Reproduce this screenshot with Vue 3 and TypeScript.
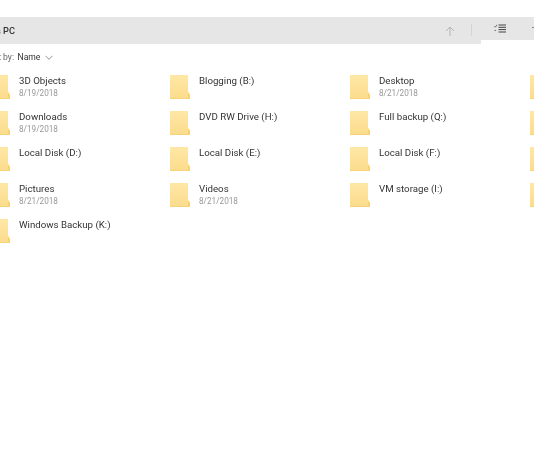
<script setup lang="ts">
interface Item { name: string; date?: string }
const items: Item[] = [
  { name: '3D Objects', date: '8/19/2018' },
  { name: 'Blogging (B:)' },
  { name: 'Desktop', date: '8/21/2018' },
  { name: 'Documents', date: '8/21/2018' },
  { name: 'Downloads', date: '8/19/2018' },
  { name: 'DVD RW Drive (H:)' },
  { name: 'Full backup (Q:)' },
  { name: 'Games (G:)' },
  { name: 'Local Disk (D:)' },
  { name: 'Local Disk (E:)' },
  { name: 'Local Disk (F:)' },
  { name: 'Music', date: '8/19/2018' },
  { name: 'Pictures', date: '8/21/2018' },
  { name: 'Videos', date: '8/21/2018' },
  { name: 'VM storage (I:)' },
  { name: 'Windows (C:)' },
  { name: 'Windows Backup (K:)' },
]
</script>

<template>
  <div class="page">
    <header class="bar">
      <span class="title">This PC</span>
      <div class="tools">
        <svg class="up" width="10" height="10" viewBox="0 0 10 10" aria-hidden="true">
          <path d="M5 10V1M1 5l4-4 4 4" fill="none" stroke="#b4b4b4" stroke-width="1" />
        </svg>
        <span class="sep"></span>
        <div class="tab">
          <svg width="12" height="9" viewBox="0 0 12 9" aria-hidden="true">
            <path d="M0.3 2.2l1 1L3 0.8M0.5 6.5h1.6" fill="none" stroke="#666" stroke-width="0.9" />
            <path d="M4.5 1h7.5M4.5 3.3h7.5M4.5 5.6h7.5M4.5 8h7.5" fill="none" stroke="#444" stroke-width="1" />
          </svg>
          <svg class="next" width="2" height="8" viewBox="0 0 2 8" aria-hidden="true">
            <path d="M0 4.5h2" stroke="#888" stroke-width="1" />
          </svg>
        </div>
      </div>
    </header>
    <div class="sort">
      <span class="sort-label">Sort by:</span>
      <span class="sort-value">Name</span>
      <svg width="8" height="5" viewBox="0 0 8 5" aria-hidden="true">
        <path d="M0.5 0.8l3.5 3.5 3.5-3.5" fill="none" stroke="#888" stroke-width="0.9" />
      </svg>
    </div>
    <div class="grid">
      <div v-for="item in items" :key="item.name" class="item">
        <svg class="folder" width="20" height="24" viewBox="0 0 20 24" aria-hidden="true">
          <defs>
            <linearGradient id="fold" x1="0" y1="0" x2="0" y2="1">
              <stop offset="0" stop-color="#fee7a6" />
              <stop offset="1" stop-color="#fcdc8c" />
            </linearGradient>
          </defs>
          <path d="M0 0h18v17l2 3v4H0z" fill="url(#fold)" />
          <path d="M18 17l2 3v4H0v-1h18z" fill="#f8d278" />
        </svg>
        <div class="text">
          <div class="name">{{ item.name }}</div>
          <div v-if="item.date" class="date">{{ item.date }}</div>
        </div>
      </div>
    </div>
  </div>
</template>

<style>
html, body { background: #fff; overflow: hidden; }
</style>

<style scoped>
.page {
  width: 534px;
  height: 462px;
  padding-top: 17px;
  box-sizing: border-box;
  overflow: hidden;
  font-family: "Roboto", "Open Sans", sans-serif;
  color: #333;
  filter: blur(0.25px);
}
.bar {
  height: 27px;
  background: #e6e6e6;
  display: flex;
  align-items: center;
  justify-content: space-between;
}
.title {
  margin-left: -17px;
  font-weight: 500;
  font-size: 9.2px;
  color: #333;
  white-space: nowrap;
}
.tools {
  display: flex;
  align-self: stretch;
}
.up { margin: 9px 16px 0 0; }
.sep {
  width: 1px;
  height: 12px;
  margin: 7px 9px 0 0;
  background: #d4d4d4;
}
.tab {
  width: 53px;
  height: 27px;
  border-bottom: 4px solid #fff;
  display: flex;
  justify-content: flex-end;
  padding-top: 7px;
  box-sizing: border-box;
  gap: 26px;
}
.next { margin-top: -1px; }
.sort {
  height: 26px;
  display: flex;
  align-items: center;
  gap: 3.5px;
  margin-left: -15px;
  font-size: 8.6px;
}
.sort-label { color: #666; }
.sort-value { color: #333; }
.sort svg { margin-left: 1px; }
.grid {
  display: grid;
  grid-template-columns: repeat(4, 180px);
  grid-auto-rows: 36px;
  margin-left: -10px;
  margin-top: 5px;
  width: 720px;
}
.item {
  display: flex;
  gap: 9px;
}
.folder { flex: none; }
.text { margin-top: 0; }
.name { font-size: 9.7px; line-height: 12px; color: #333; white-space: nowrap; }
.date { font-size: 8.2px; line-height: 13px; color: #999; }
</style>
